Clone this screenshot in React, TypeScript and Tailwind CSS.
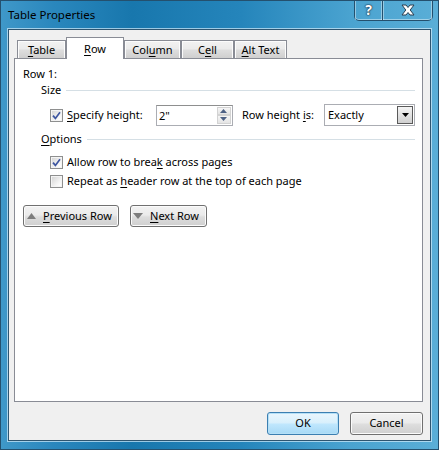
import type { ReactNode } from "react";

// Access-key letter, underlined the way Win32 dialogs draw it.
function Key({ children }: { children: ReactNode }) {
  return <span className="underline decoration-1 underline-offset-[2px]">{children}</span>;
}

function CheckBox({ checked }: { checked: boolean }) {
  return (
    <span className="flex h-[13px] w-[13px] shrink-0 items-center justify-center border border-[#8e8f8f] bg-white">
      <span className="flex h-[11px] w-[11px] items-center justify-center border border-[#f4f4f4] bg-[linear-gradient(135deg,#d6d6d6,#f6f6f6_70%,#ffffff)]">
        {checked && (
          <svg width="9" height="9" viewBox="0 0 9 9">
            <path d="M1 4.6 L3.4 7.4 L8 1.2" fill="none" stroke="#3d55a0" strokeWidth="1.7" />
          </svg>
        )}
      </span>
    </span>
  );
}

function Tab({ width, selected, children }: { width: string; selected?: boolean; children: ReactNode }) {
  if (selected) {
    return (
      <div
        className={`relative z-10 -mb-px flex h-[22px] ${width} justify-center border border-b-0 border-[#898c95] bg-white pt-[3px] leading-[16px]`}
      >
        {children}
      </div>
    );
  }
  return (
    <div
      className={`flex h-[18px] ${width} justify-center border border-b-0 border-[#898c95] bg-[linear-gradient(#f2f2f2,#ebebeb_45%,#dddddd_55%,#cfcfcf)] pt-[1px] leading-[16px] shadow-[inset_0_1px_0_#fcfcfc,inset_1px_0_0_#fcfcfc,inset_-1px_0_0_#fcfcfc]`}
    >
      {children}
    </div>
  );
}

function SectionHeader({ children }: { children: ReactNode }) {
  return (
    <div className="ml-[18px] flex h-[16px] items-center gap-[5px] leading-[16px]">
      <span>{children}</span>
      <span className="h-px flex-1 bg-[#d5dfe5]" />
    </div>
  );
}

function Button({ className, children }: { className: string; children: ReactNode }) {
  return (
    <div
      className={`flex items-center rounded-[3px] border border-[#707070] bg-[linear-gradient(#f2f2f2,#ebebeb_45%,#dddddd_55%,#cfcfcf)] shadow-[inset_0_0_0_1px_#fbfbfb] ${className}`}
    >
      {children}
    </div>
  );
}

function SpinButton({ up }: { up?: boolean }) {
  return (
    <span className="flex flex-1 items-center justify-center border border-[#d3d3d3] bg-[linear-gradient(#f6f6f6,#e4e4e4)]">
      <svg width="7" height="4" viewBox="0 0 7 4">
        <path d={up ? "M0 4 L3.5 0 L7 4 Z" : "M0 0 L7 0 L3.5 4 Z"} fill="#4d6185" />
      </svg>
    </span>
  );
}

export default function App() {
  return (
    <div className="flex h-[450px] w-[439px] flex-col overflow-hidden border border-[#24506e] bg-[linear-gradient(90deg,#3f98c9,#2a87bd_12%,#1877ad_30%,#2585bb_55%,#4aa3d0_80%,#5aaed7)] font-['Noto_Sans',sans-serif] text-[11px] text-black">
      {/* Title bar */}
      <div className="flex h-[28px] shrink-0 items-start justify-between">
        <span className="pl-[7px] pt-[6px] text-[11.5px] leading-[16px] text-black">Table Properties</span>
        <div className="-mt-px mr-[5px] flex h-[21px] rounded-b-[5px] border border-t-0 border-[#24506e] shadow-[inset_0_-1px_0_rgba(255,255,255,0.45)]">
          <div className="flex w-[28px] items-center justify-center border-r border-[#24506e] shadow-[inset_-1px_0_0_rgba(255,255,255,0.4),inset_1px_0_0_rgba(255,255,255,0.4)]">
            <span className="text-[14px] font-bold leading-none text-white [text-shadow:0_0_1px_#1c3448,0_0_1px_#1c3448,0_0_2px_#1c3448]">
              ?
            </span>
          </div>
          <div className="flex w-[49px] items-center justify-center shadow-[inset_1px_0_0_rgba(255,255,255,0.4),inset_-1px_0_0_rgba(255,255,255,0.4)]">
            <svg width="14" height="12" viewBox="0 0 14 12">
              <path
                d="M1 1 H5 L7 3.5 L9 1 H13 L9.2 6 L13 11 H9 L7 8.5 L5 11 H1 L4.8 6 Z"
                fill="#ffffff"
                stroke="#2a3f52"
                strokeWidth="1"
                strokeLinejoin="round"
              />
            </svg>
          </div>
        </div>
      </div>

      {/* Client area */}
      <div className="mx-[7px] mb-[8px] flex flex-1 flex-col border border-[#2e5570] bg-[#f0f0f0] shadow-[0_0_0_1px_rgba(210,235,250,0.7)]">
        <div className="mt-[7px] flex h-[21px] items-end pl-[8px]">
          <Tab width="w-[49px]">
            <span>
              <Key>T</Key>able
            </span>
          </Tab>
          <Tab width="w-[58px]" selected>
            <span>
              <Key>R</Key>ow
            </span>
          </Tab>
          <Tab width="w-[57px]">
            <span>
              Col<Key>u</Key>mn
            </span>
          </Tab>
          <Tab width="w-[53px]">
            <span>
              C<Key>e</Key>ll
            </span>
          </Tab>
          <Tab width="w-[53px]">
            <span>
              <Key>A</Key>lt Text
            </span>
          </Tab>
        </div>

        {/* Row page */}
        <div className="ml-[5px] mr-[7px] flex h-[344px] flex-col border border-[#898c95] bg-white pl-[8px] pr-[7px] pt-[7px] leading-[16px]">
          <div className="h-[16px]">Row 1:</div>
          <SectionHeader>Size</SectionHeader>

          <div className="mt-[6px] flex h-[22px] items-center">
            <div className="ml-[27px] flex items-center gap-[4px]">
              <CheckBox checked />
              <span>
                <Key>S</Key>pecify height:
              </span>
            </div>
            <div className="ml-auto flex h-[21px] w-[77px] border border-[#abadb3] border-t-[#8e8f8f] bg-white">
              <span className="flex-1 pl-[2px] leading-[19px]">2"</span>
              <div className="flex w-[16px] flex-col p-px">
                <SpinButton up />
                <SpinButton />
              </div>
            </div>
            <span className="ml-[9px]">
              Row height <Key>i</Key>s:
            </span>
            <div className="ml-[10px] flex h-[22px] w-[91px] items-center border border-[#abadb3] bg-white pl-[3px]">
              <span className="flex-1">Exactly</span>
              <span className="mr-px flex h-[18px] w-[16px] items-center justify-center border border-[#5a5a5a] bg-[linear-gradient(#f4f4f4,#e2e2e2_50%,#d0d0d0)]">
                <svg width="7" height="4" viewBox="0 0 7 4">
                  <path d="M0 0 L7 0 L3.5 4 Z" fill="#000000" />
                </svg>
              </span>
            </div>
          </div>

          <div className="mt-[5px]">
            <SectionHeader>
              <Key>O</Key>ptions
            </SectionHeader>
          </div>

          <div className="ml-[27px] mt-[7px] flex h-[16px] items-center gap-[4px]">
            <CheckBox checked />
            <span>
              Allow row to brea<Key>k</Key> across pages
            </span>
          </div>
          <div className="ml-[27px] mt-[3px] flex h-[16px] items-center gap-[4px]">
            <CheckBox checked={false} />
            <span>
              Repeat as <Key>h</Key>eader row at the top of each page
            </span>
          </div>

          <div className="mt-[16px] flex gap-[11px]">
            <Button className="h-[22px] w-[96px] pl-[3px]">
              <svg width="9" height="6" viewBox="0 0 9 6">
                <path d="M0 6 L4.5 0 L9 6 Z" fill="#7d7d7d" />
              </svg>
              <span className="ml-[7px]">
                <Key>P</Key>revious Row
              </span>
            </Button>
            <Button className="h-[22px] w-[77px] pl-[2px]">
              <svg width="10" height="6" viewBox="0 0 10 6">
                <path d="M0 0 L10 0 L5 6 Z" fill="#7d7d7d" />
              </svg>
              <span className="ml-[7px]">
                <Key>N</Key>ext Row
              </span>
            </Button>
          </div>
        </div>

        {/* Dialog buttons */}
        <div className="mr-[7px] mt-[10px] flex justify-end gap-[11px]">
          <div className="flex h-[23px] w-[72px] items-center justify-center rounded-[3px] border border-[#3c7fb1] bg-[linear-gradient(#eaf6fd,#d9f0fc_45%,#bee6fd_55%,#a7d9f5)] shadow-[inset_0_0_0_1px_#b5e0f7]">
            OK
          </div>
          <Button className="h-[23px] w-[73px] justify-center">Cancel</Button>
        </div>
      </div>
    </div>
  );
}
